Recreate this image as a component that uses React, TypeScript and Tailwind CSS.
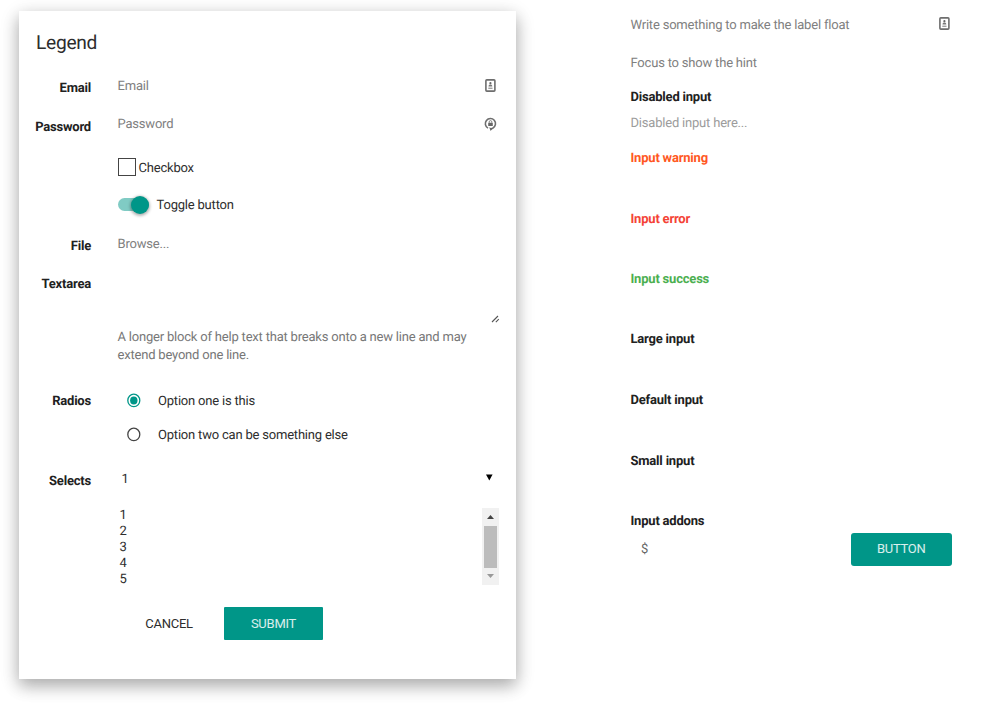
import type { ReactNode } from "react";

function ContactIcon() {
  return (
    <svg width="11" height="13" viewBox="0 0 11 13" fill="none" className="block">
      <rect x="0.9" y="0.9" width="9" height="11.2" rx="0.9" stroke="#6e6e6e" strokeWidth="1.6" />
      <circle cx="5.4" cy="4.2" r="1.1" fill="#666" />
      <path d="M3.5 7.4c0-2.6 3.8-2.6 3.8 0z" fill="#777" />
      <path d="M3.3 9.2h4.2" stroke="#777" strokeWidth="1" />
    </svg>
  );
}

function KeyIcon() {
  return (
    <svg width="13" height="15" viewBox="0 0 13 15" fill="none" className="block">
      <path d="M4 11.1A5.1 5.1 0 1 1 9 11L7 12" stroke="#6e6e6e" strokeWidth="1.6" />
      <path d="M5.2 10.3l3.2 1.4-1.8 2.3z" fill="#666" />
      <rect x="4.2" y="5.7" width="4.6" height="3.4" rx="0.4" fill="#666" />
      <path d="M5.2 5.8V4.9a1.3 1.3 0 0 1 2.6 0v.9" stroke="#777" strokeWidth="0.9" />
    </svg>
  );
}

function Row({ label, className, labelClass = "", children }: { label?: string; className: string; labelClass?: string; children?: ReactNode }) {
  return (
    <div className={"flex items-start " + className}>
      <div className={"flex w-[55px] shrink-0 justify-end whitespace-nowrap font-bold tracking-[-0.2px] text-[#212121] " + labelClass}>{label}</div>
      <div className="ml-[26.5px] w-[382px]">{children}</div>
    </div>
  );
}

function Radio({ checked, children }: { checked?: boolean; children: ReactNode }) {
  return (
    <label className="flex h-[18px] items-start pl-[9px]">
      <svg width="14" height="15" viewBox="0 0 14 15" fill="none">
        <ellipse cx="6.8" cy="7.4" rx="6" ry="6.3" stroke={checked ? "#009688" : "#444"} strokeWidth="1.3" />
        {checked && <ellipse cx="6.8" cy="7.4" rx="3.7" ry="4" fill="#009688" />}
      </svg>
      <span className="ml-[17.5px]">{children}</span>
    </label>
  );
}

function FormCard() {
  return (
    <section className="mt-[11px] ml-[19px] h-[668px] w-[497px] shrink-0 bg-white pl-[17px] shadow-[0_7px_15px_rgba(0,0,0,0.2),0_5px_18px_rgba(0,0,0,0.19)]">
      <h1 className="h-[56px] pt-[19px] text-[19.2px] leading-[26px] tracking-[-0.3px]">Legend</h1>
      <Row label="Email" className="h-[38px]" labelClass="pt-[13px]">
        <div className="flex justify-between pt-[11px] pr-[4px] text-[#808080]">
          Email
          <span className="pt-[1px]"><ContactIcon /></span>
        </div>
      </Row>
      <Row label="Password" className="h-[43px]" labelClass="pt-[14px]">
        <div className="flex justify-between pt-[11px] pr-[3px] text-[#808080]">
          Password
          <span className="pt-[1px]"><KeyIcon /></span>
        </div>
      </Row>
      <Row className="h-[38px]">
        <label className="flex items-start pt-[10px]">
          <span className="size-[18px] border-[1.5px] border-[#444] bg-white" />
          <span className="mt-[2px] ml-[3px]">Checkbox</span>
        </label>
      </Row>
      <Row className="h-[37px]">
        <label className="mt-[9px] flex h-[18px] items-start">
          <span className="mt-[3px] flex h-[13px] w-[31px] items-center justify-end rounded-full bg-[#80cbc4]">
            <span className="size-[18px] shrink-0 rounded-full bg-[#009688] shadow-[0_1px_3px_1px_rgba(0,0,0,0.3)]" />
          </span>
          <span className="mt-[2px] ml-[8px]">Toggle button</span>
        </label>
      </Row>
      <Row label="File" className="h-[41px]" labelClass="pt-[15px]">
        <div className="pt-[13px] text-[#808080]">Browse...</div>
      </Row>
      <Row label="Textarea" className="h-[116px]" labelClass="pt-[12px]">
        <div className="flex h-[60px] items-end justify-end">
          <svg width="9" height="9" viewBox="0 0 9 9" stroke="#555" strokeWidth="1.1" fill="none">
            <path d="M1 7L7 1M4.8 7.2L7.8 4.2" />
          </svg>
        </div>
        <p className="mt-[5px] whitespace-nowrap text-[#777]">
          A longer block of help text that breaks onto a new line and may
          <br />
          extend beyond one line.
        </p>
      </Row>
      <Row label="Radios" className="h-[75px]" labelClass="pt-[13px]">
        <div className="flex flex-col gap-[16px] pt-[13px]">
          <Radio checked>Option one is this</Radio>
          <Radio>Option two can be something else</Radio>
        </div>
      </Row>
      <Row label="Selects" className="h-[53px]" labelClass="pt-[18px]">
        <div className="flex justify-between pt-[16px] pr-[7px] pl-[4px]">
          1
          <svg width="7" height="7" viewBox="0 0 7 7" className="mt-[3px]"><path d="M0 .5h6.6L3.3 6.5z" fill="#000" /></svg>
        </div>
      </Row>
      <Row className="h-[99px]">
        <div className="flex h-[77px] justify-between pr-[1px]">
          <div className="pl-[2px] leading-[16px]">
            {[1, 2, 3, 4, 5].map((n) => (
              <div key={n} className="h-[16px]">{n}</div>
            ))}
          </div>
          <div className="flex w-[17px] flex-col items-center justify-between bg-[#f1f1f1] py-[7px]">
            <svg width="7" height="4" viewBox="0 0 7 4"><path d="M0 4h7L3.5 0z" fill="#444" /></svg>
            <div className="h-[42px] w-[13px] bg-[#bcbcbc]" />
            <svg width="7" height="4" viewBox="0 0 7 4"><path d="M0 0h7L3.5 4z" fill="#999" /></svg>
          </div>
        </div>
      </Row>
      <div className="flex h-[33px] items-center pl-[81.5px]">
        <button className="w-[103px] tracking-[-0.25px]">CANCEL</button>
        <button className="ml-[3.5px] h-[33px] w-[99px] rounded-[1px] bg-[#009688] tracking-[-0.25px] text-white/85">SUBMIT</button>
      </div>
    </section>
  );
}

function InputLabel({ className, children }: { className: string; children: ReactNode }) {
  return <div className={"flex items-start font-bold tracking-[-0.2px] " + className}>{children}</div>;
}

function InputColumn() {
  return (
    <section className="ml-[114.5px] w-[321.5px] pt-[17px]">
      <div className="flex h-[38px] items-start justify-between pr-[2.5px] text-[#808080]">
        Write something to make the label float
        <ContactIcon />
      </div>
      <div className="h-[34px] text-[#808080]">Focus to show the hint</div>
      <InputLabel className="h-[26px] text-[#212121]">Disabled input</InputLabel>
      <div className="h-[35px] text-[#9c9c9c]">Disabled input here...</div>
      <InputLabel className="h-[61px] text-[#ff5722]">Input warning</InputLabel>
      <InputLabel className="h-[60px] text-[#f44336]">Input error</InputLabel>
      <InputLabel className="h-[60px] text-[#4caf50]">Input success</InputLabel>
      <InputLabel className="h-[61px] text-[#212121]">Large input</InputLabel>
      <InputLabel className="h-[61px] text-[#212121]">Default input</InputLabel>
      <InputLabel className="h-[60px] text-[#212121]">Small input</InputLabel>
      <InputLabel className="h-[20px] text-[#212121]">Input addons</InputLabel>
      <div className="flex h-[33px] items-center justify-between pl-[10.5px] text-[#666]">
        $
        <button className="h-[33px] w-[101.5px] rounded-[3px] bg-[#009688] pb-[1px] tracking-[-0.25px] text-white/85">BUTTON</button>
      </div>
    </section>
  );
}

export default function App() {
  return (
    <main className="flex h-[703px] w-[1000px] items-start overflow-hidden bg-white font-['Roboto',sans-serif] text-[13px] leading-[18px] tracking-[-0.2px] text-[#2d2d2d] [text-rendering:geometricPrecision]">
      <FormCard />
      <InputColumn />
    </main>
  );
}
